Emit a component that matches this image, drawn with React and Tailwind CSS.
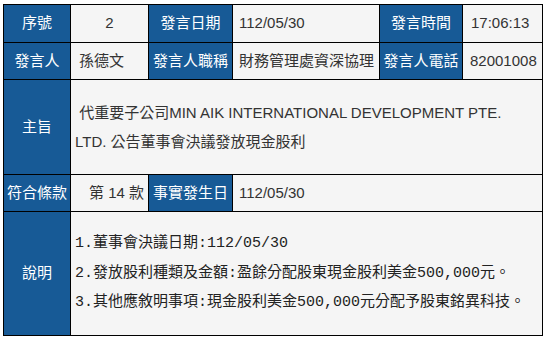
import React from 'react';

const head = "bg-[#175a96] text-white flex items-center justify-center whitespace-nowrap";
const cell = "bg-[#f5f5f5] text-[#333] flex items-center whitespace-nowrap";

export default function App() {
  return (
    <div className="w-[547px] h-[340px] bg-white pt-[4px] pl-[3px] font-['Liberation_Sans','Noto_Sans_CJK_TC',sans-serif] text-[15px]">
      <div className="w-[540px] border border-black bg-black grid grid-cols-[66px_77px_83px_146px_82px_79px] grid-rows-[37px_36px_94px_36px_123px] gap-px">
        <div className={head}>序號</div>
        <div className={`${cell} justify-center`}>2</div>
        <div className={head}>發言日期</div>
        <div className={`${cell} pl-[6px]`}>112/05/30</div>
        <div className={head}>發言時間</div>
        <div className={`${cell} pl-[8px]`}>17:06:13</div>

        <div className={head}>發言人</div>
        <div className={`${cell} pl-[8px]`}>孫德文</div>
        <div className={head}>發言人職稱</div>
        <div className={`${cell} pl-[6px]`}>財務管理處資深協理</div>
        <div className={head}>發言人電話</div>
        <div className={`${cell} pl-[7px]`}>82001008</div>

        <div className={head}>主旨</div>
        <div className="col-span-5 bg-[#f5f5f5] text-[#333] flex flex-col justify-center pl-[4px] leading-[29px]">
          <div>&nbsp;代重要子公司MIN AIK INTERNATIONAL DEVELOPMENT PTE.</div>
          <div>LTD. 公告董事會決議發放現金股利</div>
        </div>

        <div className={head}>符合條款</div>
        <div className={`${cell} pl-[18px]`}>第 14 款</div>
        <div className={head}>事實發生日</div>
        <div className={`${cell} col-span-3 pl-[6px]`}>112/05/30</div>

        <div className={head}>說明</div>
        <div className="col-span-5 bg-[#f5f5f5] text-[#222] flex flex-col justify-center pl-[4px] leading-[29.5px] font-['Liberation_Mono','Noto_Sans_CJK_TC',monospace]">
          <div>1.董事會決議日期:112/05/30</div>
          <div>2.發放股利種類及金額:盈餘分配股東現金股利美金500,000元。</div>
          <div>3.其他應敘明事項:現金股利美金500,000元分配予股東銘異科技。</div>
        </div>
      </div>
    </div>
  );
}
